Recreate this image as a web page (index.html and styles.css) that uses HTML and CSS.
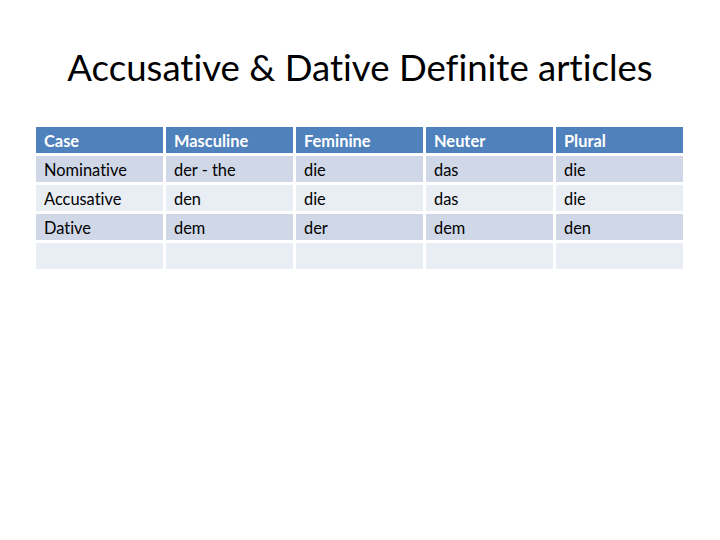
FILE: index.html
```html
<!DOCTYPE html>
<html>
<head>
<meta charset="utf-8">
<link rel="stylesheet" href="styles.css">
</head>
<body>
<div class="slide">
  <h1 class="title">Accusative &amp; Dative Definite articles</h1>
  <div class="table">
    <div class="cell head">Case</div>
    <div class="cell head">Masculine</div>
    <div class="cell head">Feminine</div>
    <div class="cell head">Neuter</div>
    <div class="cell head">Plural</div>

    <div class="cell dark">Nominative</div>
    <div class="cell dark">der - the</div>
    <div class="cell dark">die</div>
    <div class="cell dark">das</div>
    <div class="cell dark">die</div>

    <div class="cell light">Accusative</div>
    <div class="cell light">den</div>
    <div class="cell light">die</div>
    <div class="cell light">das</div>
    <div class="cell light">die</div>

    <div class="cell dark">Dative</div>
    <div class="cell dark">dem</div>
    <div class="cell dark">der</div>
    <div class="cell dark">dem</div>
    <div class="cell dark">den</div>

    <div class="cell light"></div>
    <div class="cell light"></div>
    <div class="cell light"></div>
    <div class="cell light"></div>
    <div class="cell light"></div>
  </div>
</div>
</body>
</html>
```
FILE: styles.css
```css
html, body {
  margin: 0;
  padding: 0;
  background: #ffffff;
}
.slide {
  width: 720px;
  height: 540px;
  padding: 43px 36px 0 36px;
  box-sizing: border-box;
  font-family: Lato, "Open Sans", sans-serif;
  font-variant-ligatures: none;
  color: #000;
}
.title {
  margin: 0;
  height: 48px;
  line-height: 48px;
  font-size: 36.6px;
  font-weight: normal;
  text-align: center;
  color: #000;
}
.table {
  margin-top: 36px;
  display: grid;
  grid-template-columns: repeat(5, 127px);
  grid-auto-rows: 26px;
  gap: 3px;
}
.cell {
  padding: 1px 8px 0 8px;
  font-size: 16.4px;
  line-height: 26px;
  white-space: nowrap;
  box-sizing: border-box;
  height: 26px;
}
.head {
  background: #4f81bd;
  color: #ffffff;
  font-weight: bold;
}
.dark {
  background: #d0d8e8;
}
.light {
  background: #e9edf4;
}
```
